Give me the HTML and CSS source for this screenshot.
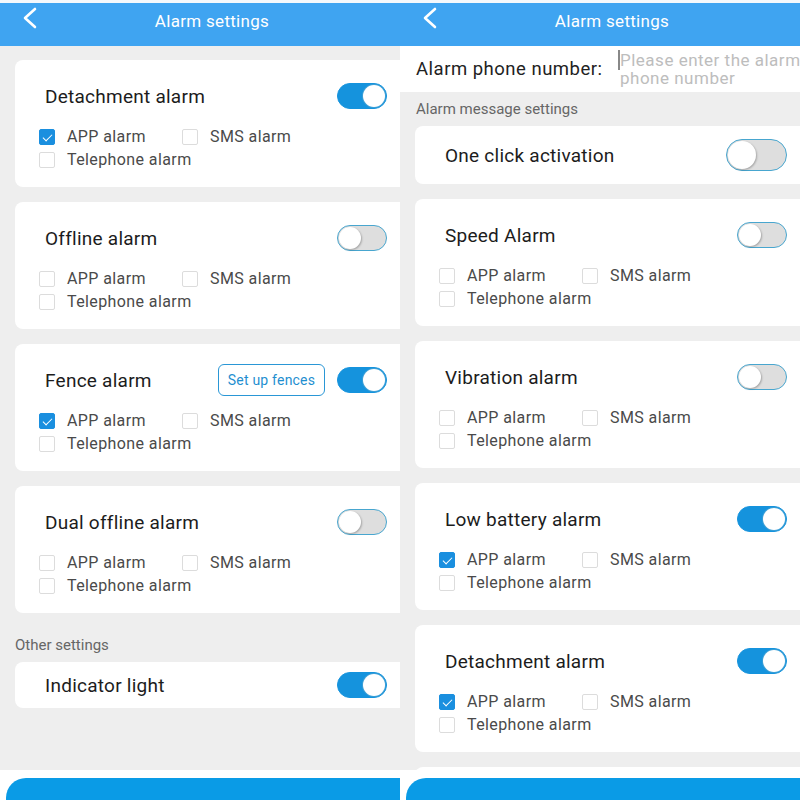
FILE: index.html
```html
<!DOCTYPE html>
<html>
<head>
<meta charset="utf-8">
<link rel="stylesheet" href="styles.css">
</head>
<body>
<div class="phone">
  <div class="screen">
    <div class="topstrip"></div>
    <header class="header">
      <svg class="back" width="16" height="22" viewBox="0 0 16 22"><polyline points="13,2 3,11 13,20" fill="none" stroke="#fff" stroke-width="2.6" stroke-linecap="round" stroke-linejoin="round"/></svg>
      <span class="htitle">Alarm settings</span>
    </header>
    <main class="content">
      <section class="card">
        <div class="trow"><span class="ttl">Detachment alarm</span><span class="toggle on"><i></i></span></div>
        <div class="opts">
          <label class="opt"><span class="cb on"></span>APP alarm</label>
          <label class="opt"><span class="cb"></span>SMS alarm</label>
          <label class="opt"><span class="cb"></span>Telephone alarm</label>
        </div>
      </section>
      <section class="card">
        <div class="trow"><span class="ttl">Offline alarm</span><span class="toggle"><i></i></span></div>
        <div class="opts">
          <label class="opt"><span class="cb"></span>APP alarm</label>
          <label class="opt"><span class="cb"></span>SMS alarm</label>
          <label class="opt"><span class="cb"></span>Telephone alarm</label>
        </div>
      </section>
      <section class="card">
        <div class="trow"><span class="ttl">Fence alarm</span><span class="fencebtn">Set up fences</span><span class="toggle on"><i></i></span></div>
        <div class="opts">
          <label class="opt"><span class="cb on"></span>APP alarm</label>
          <label class="opt"><span class="cb"></span>SMS alarm</label>
          <label class="opt"><span class="cb"></span>Telephone alarm</label>
        </div>
      </section>
      <section class="card">
        <div class="trow"><span class="ttl">Dual offline alarm</span><span class="toggle"><i></i></span></div>
        <div class="opts">
          <label class="opt"><span class="cb"></span>APP alarm</label>
          <label class="opt"><span class="cb"></span>SMS alarm</label>
          <label class="opt"><span class="cb"></span>Telephone alarm</label>
        </div>
      </section>
      <div class="section other">Other settings</div>
      <section class="card slim">
        <div class="trow"><span class="ttl">Indicator light</span><span class="toggle on"><i></i></span></div>
      </section>
    </main>
    <footer class="footer"><div class="bigbtn"></div></footer>
  </div>
</div>

<div class="phone">
  <div class="screen">
    <div class="topstrip"></div>
    <header class="header">
      <svg class="back" width="16" height="22" viewBox="0 0 16 22"><polyline points="13,2 3,11 13,20" fill="none" stroke="#fff" stroke-width="2.6" stroke-linecap="round" stroke-linejoin="round"/></svg>
      <span class="htitle">Alarm settings</span>
    </header>
    <div class="phonerow">
      <span class="plabel">Alarm phone number:</span>
      <span class="pinput"><span class="caret"></span><span class="ph">Please enter the alarm phone number</span></span>
    </div>
    <main class="content right">
      <div class="section msg">Alarm message settings</div>
      <section class="card one">
        <div class="trow"><span class="ttl">One click activation</span><span class="toggle big"><i></i></span></div>
      </section>
      <section class="card">
        <div class="trow"><span class="ttl">Speed Alarm</span><span class="toggle"><i></i></span></div>
        <div class="opts">
          <label class="opt"><span class="cb"></span>APP alarm</label>
          <label class="opt"><span class="cb"></span>SMS alarm</label>
          <label class="opt"><span class="cb"></span>Telephone alarm</label>
        </div>
      </section>
      <section class="card">
        <div class="trow"><span class="ttl">Vibration alarm</span><span class="toggle"><i></i></span></div>
        <div class="opts">
          <label class="opt"><span class="cb"></span>APP alarm</label>
          <label class="opt"><span class="cb"></span>SMS alarm</label>
          <label class="opt"><span class="cb"></span>Telephone alarm</label>
        </div>
      </section>
      <section class="card">
        <div class="trow"><span class="ttl">Low battery alarm</span><span class="toggle on"><i></i></span></div>
        <div class="opts">
          <label class="opt"><span class="cb on"></span>APP alarm</label>
          <label class="opt"><span class="cb"></span>SMS alarm</label>
          <label class="opt"><span class="cb"></span>Telephone alarm</label>
        </div>
      </section>
      <section class="card">
        <div class="trow"><span class="ttl">Detachment alarm</span><span class="toggle on"><i></i></span></div>
        <div class="opts">
          <label class="opt"><span class="cb on"></span>APP alarm</label>
          <label class="opt"><span class="cb"></span>SMS alarm</label>
          <label class="opt"><span class="cb"></span>Telephone alarm</label>
        </div>
      </section>
      <section class="card"></section>
    </main>
    <footer class="footer"><div class="bigbtn"></div></footer>
  </div>
</div>
</body>
</html>
```

FILE: styles.css
```css
* { box-sizing: border-box; }
html, body { margin: 0; padding: 0; }
body {
  display: flex;
  width: 800px;
  height: 800px;
  overflow: hidden;
  background: #fff;
  font-family: Roboto, "Noto Sans", "Liberation Sans", sans-serif;
}
.phone {
  width: 400px;
  height: 800px;
  overflow: hidden;
  position: relative;
}
.screen {
  width: 424px;
  height: 800px;
  display: flex;
  flex-direction: column;
  background: #eeeeee;
}
.topstrip { height: 3px; background: #f4f8fc; flex: none; }
.header {
  height: 43px;
  flex: none;
  background: #3fa4f1;
  display: flex;
  align-items: center;
  justify-content: center;
  position: relative;
}
.back { position: absolute; left: 22px; top: 4px; }
.htitle { color: #fff; font-size: 17px; letter-spacing: 0.3px; margin-top: -7px; }

.content { padding: 14px 15px 0 15px; display: flex; flex-direction: column; }
.content.right { padding-top: 0; }

.card {
  background: #fff;
  border-radius: 8px;
  padding: 23px 22px 16px 24px;
  margin-bottom: 15px;
  height: 127px;
  flex: none;
}
.card.slim { height: 46px; padding: 10px 22px 10px 24px; }
.card.one { height: 58px; padding: 0 0 0 24px; display: flex; align-items: center; }
.card.one .trow { width: 100%; padding-right: 0; }

.trow {
  display: flex;
  align-items: center;
  height: 26px;
  padding-left: 6px;
  gap: 12px;
}
.ttl { font-size: 19px; color: #1c1c1c; flex: 1; letter-spacing: 0.25px; white-space: nowrap; }

.fencebtn {
  height: 32px;
  width: 107px;
  border: 1px solid #2a97d6;
  border-radius: 6px;
  color: #1f8fd0;
  font-size: 14px;
  letter-spacing: 0.2px;
  display: flex;
  align-items: center;
  justify-content: center;
  flex: none;
  white-space: nowrap;
}

.toggle {
  width: 50px;
  height: 26px;
  border-radius: 13px;
  background: #dedede;
  border: 1.5px solid #48a6cf;
  display: flex;
  align-items: center;
  justify-content: flex-start;
  padding: 0 1px;
  flex: none;
}
.toggle i {
  width: 22px;
  height: 22px;
  border-radius: 50%;
  background: #fff;
  box-shadow: 1px 1px 2px rgba(0,0,0,0.25);
  display: block;
}
.toggle.on {
  background: #1593dd;
  border-color: #1593dd;
  justify-content: flex-end;
}
.toggle.on i { box-shadow: 0 0 0 1px #3c9fd6; }
.toggle.big { width: 61px; height: 32px; border-radius: 16px; margin-right: 22px; }
.toggle.big i { width: 28px; height: 28px; }

.opts {
  display: grid;
  grid-template-columns: 143px 1fr;
  margin-top: 16px;
  row-gap: 0;
}
.opt {
  display: flex;
  align-items: center;
  height: 23px;
  font-size: 16px;
  color: #4a4a4a;
  letter-spacing: 0.4px;
  white-space: nowrap;
}
.cb {
  width: 16px;
  height: 16px;
  border: 1px solid #dcdcdc;
  border-radius: 2px;
  background: #fff;
  margin-right: 12px;
  flex: none;
  position: relative;
}
.cb.on {
  background: #1a8fdf;
  border-color: #1a8fdf;
}
.cb.on::after {
  content: "";
  position: absolute;
  left: 4.5px;
  top: 2px;
  width: 4px;
  height: 8px;
  border: solid #fff;
  border-width: 0 1.6px 1.6px 0;
  transform: rotate(45deg);
}

.section {
  font-size: 15px;
  color: #666;
  flex: none;
}
.section.other { margin-top: 8px; height: 26px; line-height: 18px; }
.section.msg { height: 34px; display: flex; align-items: center; padding-left: 1px; }

.phonerow {
  height: 46px;
  flex: none;
  background: #fff;
  display: flex;
  align-items: center;
  padding-left: 16px;
}
.plabel { font-size: 18.5px; color: #222; width: 202px; flex: none; letter-spacing: 0.5px; white-space: nowrap; }
.pinput { position: relative; display: block; width: 214px; }
.caret { position: absolute; left: 0; top: -1px; width: 1.5px; height: 20px; background: #888; }
.ph {
  display: block;
  padding-left: 2px;
  font-size: 17px;
  line-height: 18px;
  color: #bdbdbd;
  width: 205px;
  margin-top: 0;
  letter-spacing: 0.5px;
}

.footer {
  position: absolute;
  left: 0;
  bottom: 0;
  width: 424px;
  height: 30px;
  background: #fff;
  padding: 8px 6px 0 6px;
}
.bigbtn {
  height: 44px;
  border-radius: 20px;
  background: #0a9be6;
}
```
